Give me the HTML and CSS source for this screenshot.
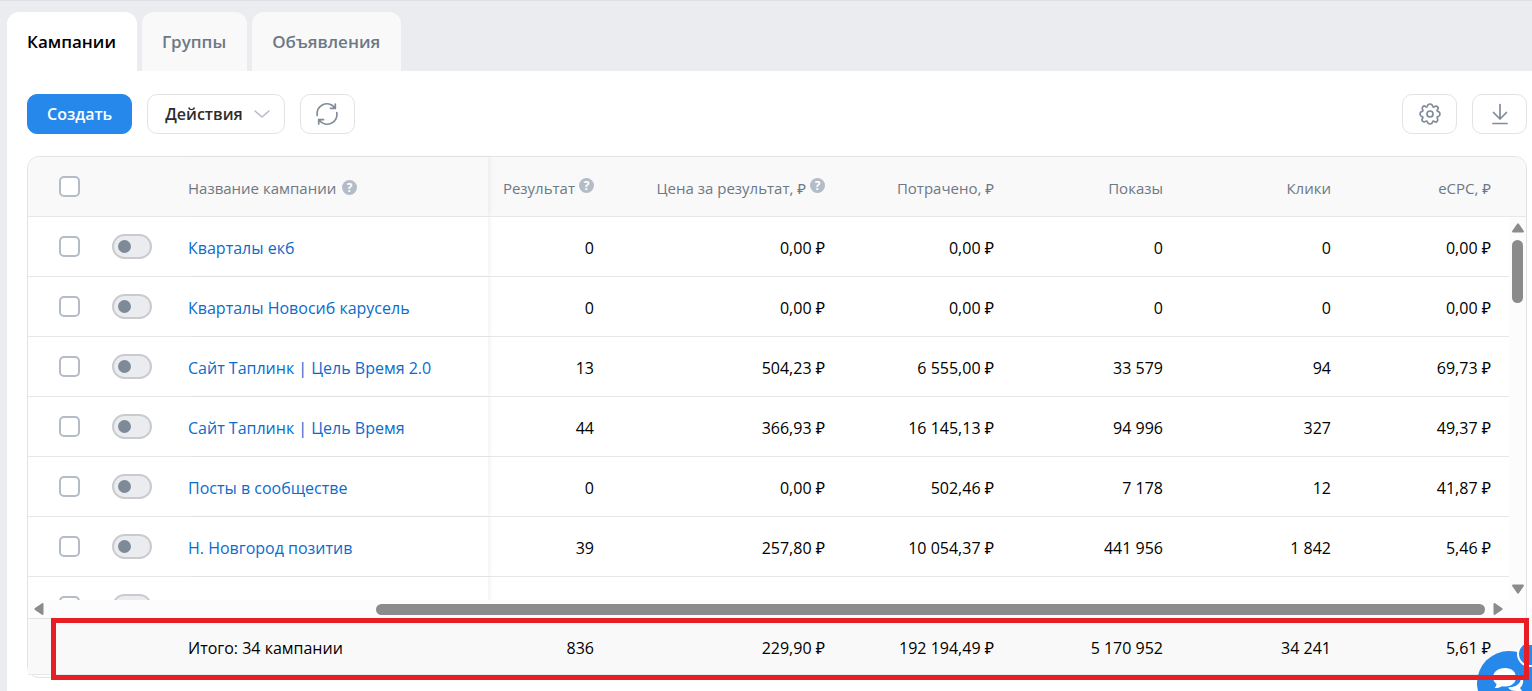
FILE: index.html
```html
<!DOCTYPE html>
<html lang="ru">
<head>
<meta charset="utf-8">
<title>Кампании</title>
<link rel="stylesheet" href="styles.css">
</head>
<body>
<nav class="tabs">
  <button class="tab tab-active" type="button">Кампании</button>
  <button class="tab" type="button">Группы</button>
  <button class="tab" type="button">Объявления</button>
</nav>
<main class="panel">
  <div class="toolbar">
    <button class="btn btn-primary" type="button">Создать</button>
    <button class="btn btn-menu" type="button">Действия
      <svg width="16" height="8" viewBox="0 0 16 8" fill="none" stroke="#b4bac3" stroke-width="1.5" stroke-linecap="round" stroke-linejoin="round"><path d="M1 1l7 6 7-6"/></svg>
    </button>
    <button class="btn btn-icon" type="button" aria-label="Обновить">
      <svg width="24" height="24" viewBox="0 0 24 24" fill="none" stroke="#818c99" stroke-width="1.7" stroke-linecap="round" stroke-linejoin="miter"><path d="M2.200 13.500A9.800 9.800 0 0 1 19.500 5.500M21.800 10.500A9.800 9.800 0 0 1 4.500 18.500M20.300 2V6.300H15.500M3.700 22V17.700H8.500"/></svg>
    </button>
    <span class="spacer"></span>
    <button class="btn btn-icon" type="button" aria-label="Настройки">
      <svg width="24" height="24" viewBox="0 0 24 24" fill="none" stroke="#7f8b9b" stroke-width="1.700" stroke-linejoin="round"><path d="M9.300 4.200Q9.700 2 12 2T14.700 4.200Q15.300 5.700 16.600 4.600Q18.200 3.500 19.600 4.900T19.400 7.600Q18.500 9 20 9.400Q22 10 22 12T20 14.600Q18.500 15.200 19.400 16.500Q20.500 18 19.100 19.400T16.400 19.400Q15 18.500 14.600 20Q14 22 12 22T9.400 20Q8.900 18.500 7.600 19.400Q6 20.500 4.600 19.100T4.600 16.400Q5.500 15 4 14.600Q2 14 2 12T4 9.400Q5.500 8.900 4.600 7.600Q3.500 6 4.900 4.600T7.500 4.600Q8.900 5.600 9.300 4.200Z"/><circle cx="12" cy="12" r="3"/></svg>
    </button>
    <button class="btn btn-icon" type="button" aria-label="Скачать">
      <svg width="24" height="24" viewBox="0 0 24 24" fill="none" stroke="#7f8b9b" stroke-width="1.700" stroke-linecap="round" stroke-linejoin="round"><path d="M12 2.500v14.500M5.500 10.500l6.500 6.500 6.500-6.500M5 21.500h14"/></svg>
    </button>
  </div>

  <section class="report">
    <table class="grid grid-head">
      <thead>
        <tr>
          <th class="pick"><input class="check" type="checkbox" aria-label="Выбрать все"></th>
          <th></th>
          <th class="name">Название кампании <span class="help">?</span></th>
          <th>Результат <span class="help help-raised">?</span></th>
          <th>Цена за результат, ₽ <span class="help help-raised">?</span></th>
          <th>Потрачено, ₽</th>
          <th>Показы</th>
          <th>Клики</th>
          <th>eCPC, ₽</th>
        </tr>
      </thead>
    </table>
    <div class="viewport">
      <table class="grid grid-body">
        <tbody>
          <tr><td class="pick"><input class="check" type="checkbox" aria-label="Кварталы екб"></td><td class="state"><input class="switch" type="checkbox" aria-label="Включить"></td><td class="name"><a href="#">Кварталы екб</a></td><td>0</td><td>0,00 ₽</td><td>0,00 ₽</td><td>0</td><td>0</td><td>0,00 ₽</td></tr>
          <tr><td class="pick"><input class="check" type="checkbox" aria-label="Кварталы Новосиб карусель"></td><td class="state"><input class="switch" type="checkbox" aria-label="Включить"></td><td class="name"><a href="#">Кварталы Новосиб карусель</a></td><td>0</td><td>0,00 ₽</td><td>0,00 ₽</td><td>0</td><td>0</td><td>0,00 ₽</td></tr>
          <tr><td class="pick"><input class="check" type="checkbox" aria-label="Сайт Таплинк | Цель Время 2.0"></td><td class="state"><input class="switch" type="checkbox" aria-label="Включить"></td><td class="name"><a href="#">Сайт Таплинк | Цель Время 2.0</a></td><td>13</td><td>504,23 ₽</td><td>6 555,00 ₽</td><td>33 579</td><td>94</td><td>69,73 ₽</td></tr>
          <tr><td class="pick"><input class="check" type="checkbox" aria-label="Сайт Таплинк | Цель Время"></td><td class="state"><input class="switch" type="checkbox" aria-label="Включить"></td><td class="name"><a href="#">Сайт Таплинк | Цель Время</a></td><td>44</td><td>366,93 ₽</td><td>16 145,13 ₽</td><td>94 996</td><td>327</td><td>49,37 ₽</td></tr>
          <tr><td class="pick"><input class="check" type="checkbox" aria-label="Посты в сообществе"></td><td class="state"><input class="switch" type="checkbox" aria-label="Включить"></td><td class="name"><a href="#">Посты в сообществе</a></td><td>0</td><td>0,00 ₽</td><td>502,46 ₽</td><td>7 178</td><td>12</td><td>41,87 ₽</td></tr>
          <tr><td class="pick"><input class="check" type="checkbox" aria-label="Н. Новгород позитив"></td><td class="state"><input class="switch" type="checkbox" aria-label="Включить"></td><td class="name"><a href="#">Н. Новгород позитив</a></td><td>39</td><td>257,80 ₽</td><td>10 054,37 ₽</td><td>441 956</td><td>1 842</td><td>5,46 ₽</td></tr>
          <tr><td class="pick"><input class="check" type="checkbox" aria-label="Кампания"></td><td class="state"><input class="switch" type="checkbox" aria-label="Включить"></td><td class="name"></td><td></td><td></td><td></td><td></td><td></td><td></td></tr>
        </tbody>
      </table>
      <div class="vscroll">
        <svg width="12" height="10" viewBox="0 0 12 10" fill="#8b8b8b"><path d="M5 1Q6-.3 7 1L11.800 8Q12.300 9.500 11 9.500H1Q-.3 9.500 .2 8Z"/></svg>
        <span class="vthumb"></span>
        <span class="spacer"></span>
        <svg width="12" height="10" viewBox="0 0 12 10" fill="#8b8b8b"><path d="M5 9Q6 10.300 7 9L11.800 2Q12.300 .5 11 .5H1Q-.3 .5 .2 2Z"/></svg>
      </div>
    </div>
    <div class="hscroll">
      <svg width="10" height="12" viewBox="0 0 10 12" fill="#8b8b8b"><path d="M1 5Q-.3 6 1 7L8 11.800Q9.500 12.300 9.500 11V1Q9.500-.3 8 .2Z"/></svg>
      <span class="htrack"><span class="hthumb"></span></span>
      <svg width="10" height="12" viewBox="0 0 10 12" fill="#8b8b8b"><path d="M9 5Q10.300 6 9 7L2 11.800Q.5 12.300 .5 11V1Q.5-.3 2 .2Z"/></svg>
    </div>
    <div class="totals">
      <table class="grid grid-foot">
        <tbody>
          <tr><td></td><td></td><td class="name">Итого: 34 кампании</td><td>836</td><td>229,90 ₽</td><td>192 194,49 ₽</td><td>5 170 952</td><td>34 241</td><td>5,61 ₽</td></tr>
        </tbody>
      </table>
      <span class="highlight"></span>
    </div>
  </section>
</main>
<button class="chat" type="button" aria-label="Чат">
  <svg width="55" height="46" viewBox="0 0 55 46"><circle cx="32" cy="38" r="32" fill="#2688eb"/><path d="M41 29Q45 32 43 37Q40 42 31 42.500Q33 46 40 46H45L43 43Q48 38 45 33Q43.500 30 41 29Z" fill="#fff"/><path d="M28 23C21 23 16 27 16 32.500C16 35.500 17.500 37.500 19.500 39C19.500 40.500 18.500 42 17.500 43C20.500 43 23 42.500 25 41.200C34 42.500 39 38 39 32.500C39 27 35 23 28 23Z" fill="#fff"/><circle cx="53" cy="9" r="12" fill="#2688eb" stroke="#fff" stroke-width="2"/></svg>
</button>
</body>
</html>
```
FILE: styles.css
```css
* { box-sizing: border-box; }
body {
  margin: 0;
  min-height: 100vh;
  display: flex;
  flex-direction: column;
  padding-left: 7px;
  background: #ebecf0;
  border-top: 1px solid #dfe0e5;
  color: #000;
  font: 16px/24px "Open Sans", "Noto Sans", sans-serif;
  overflow: hidden;
}
button { font: inherit; margin: 0; cursor: pointer; }
a { color: #0a6ccc; text-decoration: none; }

.tabs { display: flex; gap: 5px; padding-top: 11px; }
.tab {
  height: 59px;
  padding: 0 21px 0 20px;
  border: 0;
  border-radius: 12px 12px 0 0;
  background: #f9f9f9;
  color: #6d7885;
  font-size: 17px;
  font-weight: 600;
}
.tab-active { background: #fff; color: #000; }

.panel { flex: 1; background: #fff; padding: 23px 5px 13px 20px; }
.toolbar { display: flex; gap: 15px; margin-bottom: 22px; }
.spacer { flex: 1; }
.btn {
  display: flex;
  align-items: center;
  justify-content: center;
  height: 40px;
  border: 1px solid #e1e3e6;
  border-radius: 10px;
  background: #fff;
  color: #2c2d2e;
  font-weight: 600;
}
.btn-primary { padding: 0 19px; border-color: #2688eb; background: #2688eb; color: #fff; }
.btn-menu { gap: 11px; padding: 0 14px 0 17px; }
.btn-icon { width: 55px; padding: 0; }

.report { position: relative; border: 1px solid #e1e3e6; border-radius: 12px; padding-bottom: 2px; }
.grid { display: block; flex: 1; }
.grid thead, .grid tbody { display: block; }
.grid tr {
  display: grid;
  grid-template-columns: 84px 76px 300px 124fr 231fr 169fr 169fr 168fr 160fr;
  height: 60px;
  border-bottom: 1px solid #e7e8ec;
}
.grid th, .grid td {
  display: flex;
  align-items: center;
  justify-content: flex-end;
  gap: 4px;
  padding: 2px 18px 0 0;
  white-space: nowrap;
}
.grid .name { justify-content: flex-start; padding-right: 0; box-shadow: 3px 0 3px rgba(0, 0, 0, 0.04); }
.grid .pick { justify-content: flex-start; padding: 0 0 0 31px; }
.grid .state { justify-content: flex-start; padding: 0; }
.grid-head { background: #f9f9f9; border-radius: 12px 12px 0 0; }
.grid-head tr { padding-right: 17px; }
.grid-head th { color: #6d7885; font-size: 15px; font-weight: 400; }
.grid-head .name { gap: 6px; }
.help {
  display: grid;
  place-items: center;
  width: 15px;
  height: 15px;
  border-radius: 50%;
  background: #b4bcc8;
  color: #fff;
  font-size: 12px;
  font-weight: 700;
  line-height: 15px;
}
.help-raised { margin-bottom: 4px; }

.check {
  appearance: none;
  width: 21px;
  height: 21px;
  margin: 0;
  border: 2px solid #b5bbc7;
  border-radius: 5px;
  background: #fff;
}
.switch {
  appearance: none;
  display: flex;
  align-items: center;
  width: 40px;
  height: 25px;
  margin: 0;
  padding-left: 4px;
  border: 2px solid #c9cbcf;
  border-radius: 13px;
  background: #ebecf0;
}
.switch::before { content: ""; width: 13px; height: 13px; border-radius: 50%; background: #7e8a98; }

.viewport { display: flex; height: 383px; overflow: hidden; }
.vscroll {
  display: flex;
  flex-direction: column;
  align-items: center;
  gap: 7px;
  width: 17px;
  padding: 6px 0;
  background: #fcfcfc;
}
.vthumb { width: 11px; height: 63px; border-radius: 6px; background: #8b8b8b; }
.hscroll {
  display: flex;
  align-items: center;
  gap: 8px;
  height: 19px;
  padding: 0 23px 0 6px;
  background: #fcfcfc;
  border-bottom: 1px solid #e1e3e6;
}
.htrack { flex: 1; display: flex; justify-content: flex-end; }
.hthumb { width: 77.4%; height: 11px; border-radius: 6px; background: #8b8b8b; }

.totals { position: relative; background: #f9f9f9; }
.grid-foot tr { height: 56px; padding-right: 17px; }
.grid-foot .name { box-shadow: none; }
.highlight {
  position: absolute;
  z-index: 2;
  inset: -1px -3px -5px 23px;
  border: 5px solid #e81e25;
}

.chat { position: fixed; z-index: 1; right: 0; bottom: 0; border: 0; padding: 0; background: none; display: block; line-height: 0; }
```
